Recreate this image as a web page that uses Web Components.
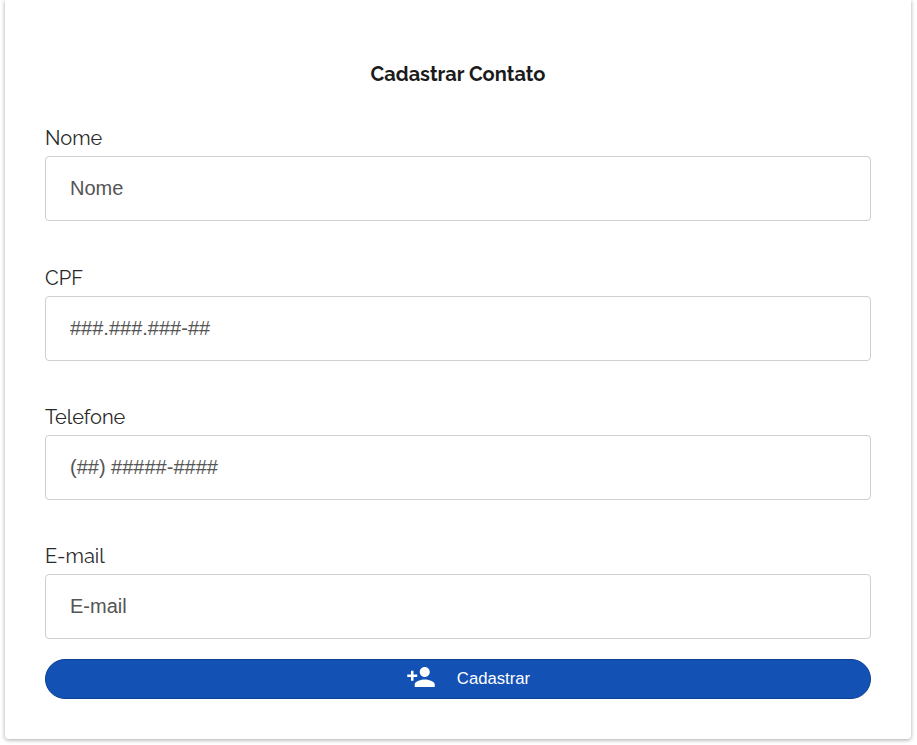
<!DOCTYPE html>
<html lang="pt-BR">
<head>
<meta charset="utf-8">
<title>Cadastrar Contato</title>
<style>
  html, body { margin: 0; background: #fff; }
  body { padding: 0 6px 6px 5px; }
</style>
</head>
<body>
<contact-card>
  <span slot="title">Cadastrar Contato</span>
  <form-field label="Nome" placeholder="Nome"></form-field>
  <form-field label="CPF" placeholder="###.###.###-##"></form-field>
  <form-field label="Telefone" placeholder="(##) #####-####"></form-field>
  <form-field label="E-mail" placeholder="E-mail"></form-field>
  <submit-button>Cadastrar</submit-button>
</contact-card>

<script>
class ContactCard extends HTMLElement {
  constructor() {
    super();
    this.attachShadow({ mode: "open" });
    this.shadowRoot.innerHTML = `
      <style>
        :host {
          display: block;
          box-sizing: border-box;
          height: 739px;
          padding: 64px 40px 0;
          background: #fff;
          border-radius: 0 0 4px 4px;
          box-shadow: 0 1px 4px rgba(0, 0, 0, 0.35);
          font-family: Raleway, Lato, "Liberation Sans", sans-serif;
        }
        h1 {
          margin: 0 0 43.4px;
          font-size: 20px;
          line-height: 20px;
          font-weight: 700;
          color: #1b1b1b;
          text-align: center;
        }
      </style>
      <h1><slot name="title"></slot></h1>
      <slot></slot>
    `;
  }
}

class FormField extends HTMLElement {
  constructor() {
    super();
    this.attachShadow({ mode: "open" });
    this.shadowRoot.innerHTML = `
      <style>
        :host { display: block; margin-bottom: 45.2px; }
        :host(:last-of-type) { margin-bottom: 20px; }
        label {
          display: block;
          height: 20px;
          padding-top: 1px;
          margin-bottom: 8px;
          font-size: 20px;
          line-height: 20px;
          color: #2a2a2a;
        }
        input {
          display: block;
          box-sizing: border-box;
          width: 100%;
          height: 65px;
          padding: 0 24px;
          border: 1px solid #cfcfcf;
          border-radius: 4px;
          background: #fff;
          font: 20px "Liberation Sans", Arial, sans-serif;
          outline: none;
        }
        input::placeholder { color: #555; opacity: 1; }
      </style>
      <label for="f"></label>
      <input id="f" type="text">
    `;
    this.shadowRoot.querySelector("label").textContent = this.getAttribute("label");
    this.shadowRoot.querySelector("input").placeholder = this.getAttribute("placeholder");
  }
}

class SubmitButton extends HTMLElement {
  constructor() {
    super();
    this.attachShadow({ mode: "open" });
    this.shadowRoot.innerHTML = `
      <style>
        :host { display: block; }
        button {
          display: flex;
          align-items: center;
          justify-content: center;
          gap: 21px;
          box-sizing: border-box;
          width: 100%;
          height: 40px;
          padding: 0 0 0 20px;
          border: 1px solid #0d3f94;
          border-radius: 20px;
          background: #1351b4;
          color: #fff;
          font: 16.7px "Liberation Sans", Arial, sans-serif;
        }
        svg { width: 30px; height: 30px; margin-bottom: 4px; fill: #fff; display: block; }
      </style>
      <button type="button">
        <svg viewBox="0 0 24 24"><path d="M15 12c2.21 0 4-1.79 4-4s-1.79-4-4-4-4 1.79-4 4 1.79 4 4 4zm-9-2V7H4v3H1v2h3v3h2v-3h3v-2H6zm9 4c-2.67 0-8 1.34-8 4v2h16v-2c0-2.66-5.33-4-8-4z"/></svg>
        <span><slot></slot></span>
      </button>
    `;
  }
}

customElements.define("contact-card", ContactCard);
customElements.define("form-field", FormField);
customElements.define("submit-button", SubmitButton);
</script>
</body>
</html>
